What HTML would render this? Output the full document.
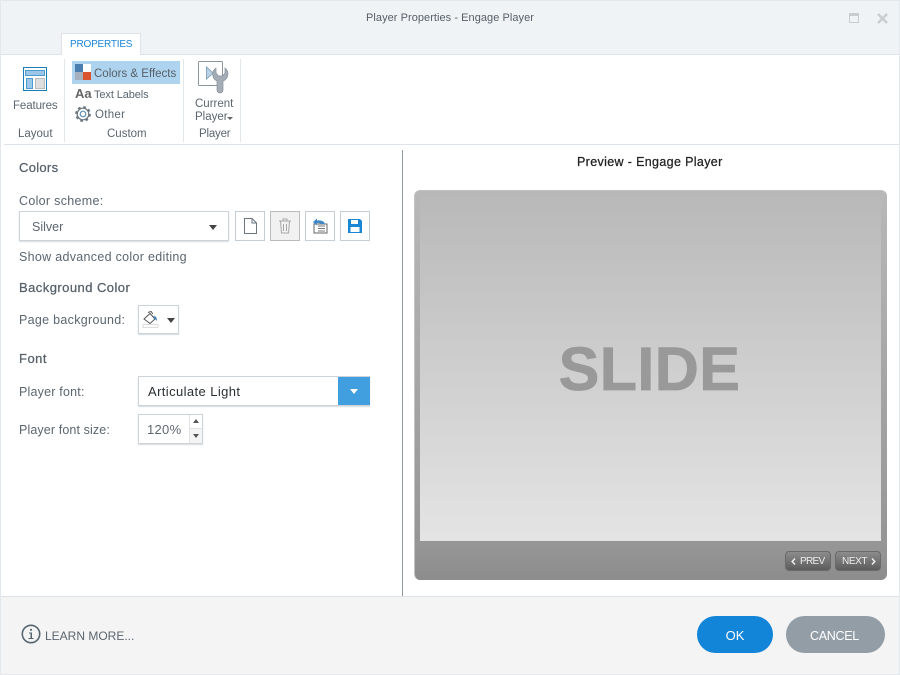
<!DOCTYPE html>
<html><head><meta charset="utf-8"><style>
html,body{margin:0;padding:0}
body{width:900px;height:675px;position:relative;overflow:hidden;background:#fff;font-family:"Liberation Sans",sans-serif;color:#5b6670;font-size:12.5px}
.t{position:absolute;white-space:nowrap;line-height:16px;letter-spacing:.3px}
.r{font-size:11.5px;letter-spacing:0}
.b{position:absolute;box-sizing:border-box}
.h{font-size:13px;font-weight:400;color:#56606a;-webkit-text-stroke:.25px #56606a}
svg{position:absolute;overflow:visible}
.ib{position:absolute;top:211px;width:30px;height:30px;box-sizing:border-box;border:1px solid #c3ced6;background:#fff}
</style></head><body>
<div class="b" style="left:0;top:0;width:900px;height:675px;border:1px solid #e3e8ed;z-index:9;pointer-events:none"></div>
<div class="b" style="left:1px;top:1px;width:898px;height:53px;background:#f0f3f6"></div>
<div class="t" style="left:0;width:900px;text-align:center;top:10px;font-size:11px;letter-spacing:.05px;color:#565f68">Player Properties - Engage Player</div>
<svg style="left:849px;top:13px" width="11" height="11"><rect x=".5" y=".5" width="9" height="9" fill="none" stroke="#c9ccd0"/><rect x="0" y="0" width="10" height="3" fill="#c9ccd0"/></svg>
<svg style="left:877px;top:13px" width="11" height="11"><path d="M1 1L10 10M10 1L1 10" stroke="#c9ccd0" stroke-width="2.4"/></svg>
<div class="b" style="left:1px;top:54px;width:898px;height:1px;background:#dde3e8"></div>
<div class="b" style="left:61px;top:33px;width:80px;height:22px;background:#fff;border:1px solid #dde3e8;border-bottom:0"></div>
<div class="t" style="left:70px;top:37px;font-size:10px;letter-spacing:-.2px;color:#1a86d6">PROPERTIES</div>

<div class="b" style="left:23px;top:67px;width:24px;height:24px;border:1px solid #1a7fb8;background:#fff"></div>
<div class="b" style="left:25px;top:70px;width:20px;height:6px;background:#9cc7e6;border:1px solid #4d9bd0"></div>
<div class="b" style="left:26px;top:78px;width:7px;height:11px;background:#9cc7e6;border:1px solid #4d9bd0"></div>
<div class="b" style="left:35px;top:78px;width:10px;height:11px;background:#dedede;border:1px solid #bbb"></div>
<div class="t r" style="left:13px;top:98px;letter-spacing:-.1px">Features</div>
<div class="t r" style="left:18px;top:126px">Layout</div>
<div class="b" style="left:64px;top:59px;width:1px;height:83px;background:#e2e7eb"></div>

<div class="b" style="left:72px;top:61px;width:108px;height:23px;background:#aed3ee"></div>
<div class="b" style="left:75px;top:64px;width:8px;height:8px;background:#4a7eb0"></div>
<div class="b" style="left:83px;top:64px;width:8px;height:8px;background:#fff"></div>
<div class="b" style="left:75px;top:72px;width:8px;height:8px;background:#a5b0bf"></div>
<div class="b" style="left:83px;top:72px;width:8px;height:8px;background:#d9532c"></div>
<div class="t r" style="left:94px;top:66px;color:#56606a">Colors &amp; Effects</div>
<div class="t" style="left:75px;top:86px;font-size:13px;font-weight:700;color:#666;letter-spacing:0">Aa</div>
<div class="t" style="left:94px;top:87px;font-size:11px;letter-spacing:-.1px">Text Labels</div>
<svg style="left:75px;top:106px" width="16" height="16" viewBox="0 0 16 16"><circle cx="8" cy="8" r="5.800" fill="#fff" stroke="#6a747d" stroke-width="1.200"/><circle cx="8" cy="8" r="2.800" fill="none" stroke="#5a8fb8" stroke-width="1.200"/><circle cx="8" cy="8" r="7" fill="none" stroke="#6a747d" stroke-width="1.700" stroke-dasharray="2.750 2.750"/></svg>
<div class="t" style="left:95px;top:107px;font-size:11.5px">Other</div>
<div class="t r" style="left:107px;top:126px">Custom</div>
<div class="b" style="left:183px;top:59px;width:1px;height:83px;background:#e2e7eb"></div>

<svg style="left:197px;top:60px" width="36" height="34" viewBox="0 0 36 34"><rect x="1.500" y="1.500" width="24" height="24" rx="1" fill="#fff" stroke="#8b959e"/><path d="M9.500 7L16 13L9.500 19Z" fill="#bcd3e6" stroke="#87a7c0"/><path d="M19 8A7.500 7.500 0 0 0 20 21V30A3 3 0 0 0 26 30V21A7.500 7.500 0 0 0 28 8V13L25.500 16H21.500L19 13Z" fill="#a4adb6" stroke="#87919a" stroke-width=".7"/></svg>
<div class="t r" style="left:195px;top:96px">Current</div>
<div class="t r" style="left:195px;top:109px">Player</div>
<svg style="left:227px;top:117px" width="6" height="3"><path d="M0 0H6L3 3Z" fill="#666"/></svg>
<div class="t r" style="left:199px;top:126px;letter-spacing:-.2px">Player</div>
<div class="b" style="left:240px;top:59px;width:1px;height:83px;background:#e2e7eb"></div>
<div class="b" style="left:4px;top:144px;width:895px;height:1px;background:#dde3e8"></div>

<div class="t h" style="left:19px;top:160px">Colors</div>
<div class="t" style="left:19px;top:193px">Color scheme:</div>
<div class="b" style="left:19px;top:211px;width:210px;height:30px;border:1px solid #ccd4da;box-shadow:0 1px 1px #d5dbe0;background:#fff"></div>
<div class="t" style="left:32px;top:219px;letter-spacing:0">Silver</div>
<svg style="left:209px;top:225px" width="9" height="5"><path d="M0 0H8L4 5Z" fill="#444"/></svg>

<div class="ib" style="left:235px"></div>
<svg style="left:244px;top:218px" width="13" height="16"><path d="M.5.500H8L12.500 5V15.500H.5ZM8 .5V5H12.500" fill="#fff" stroke="#6b7680"/></svg>
<div class="ib" style="left:270px;background:#f1f1f1;border-color:#bcbcbc"></div>
<svg style="left:278px;top:218px" width="14" height="16"><path d="M1 3H13M5 3V1H9V3M2.500 3.500L3.500 15H10.500L11.500 3.500M5.500 6V13M8.500 6V13" fill="none" stroke="#a9a9a9"/></svg>
<div class="ib" style="left:305px"></div>
<svg style="left:312px;top:217px" width="17" height="17" viewBox="0 0 17 17"><path d="M2 7H15V16H2Z" fill="#fff" stroke="#666"/><path d="M6 9H13M6 11.500H13M6 14H13" stroke="#777"/><path d="M1 5L5 1.500V3.500C9 3 12 4 13 7H9C8 6 6 6 5 6V8.500Z" fill="#3f87c7"/></svg>
<div class="ib" style="left:340px"></div>
<svg style="left:347px;top:218px" width="16" height="16" viewBox="0 0 16 16"><path d="M1 1H13L15 3V15H1Z" fill="#1a86d6"/><rect x="4" y="2" width="7" height="4" fill="#fff"/><rect x="3.500" y="9" width="9" height="5" fill="#fff"/></svg>
<div class="t" style="left:19px;top:249px">Show advanced color editing</div>

<div class="t h" style="left:19px;top:280px;letter-spacing:.45px">Background Color</div>
<div class="t" style="left:19px;top:312px">Page background:</div>
<div class="b" style="left:138px;top:305px;width:41px;height:29px;border:1px solid #ccd4da;box-shadow:0 1px 1px #d5dbe0;background:#fff"></div>
<svg style="left:142px;top:311px" width="18" height="18" viewBox="0 0 18 18"><path d="M2 8L8 2.500L13 8L8 12.500Z" fill="#fff" stroke="#555"/><path d="M6 1.500L9 .5L11 3" fill="none" stroke="#555"/><path d="M11.500 5C14 5 15 7 15 10L12.500 7.500Z" fill="#3f87c7"/><rect x="1" y="13.500" width="15" height="3" fill="#fff" stroke="#ddd"/></svg>
<svg style="left:167px;top:318px" width="9" height="5"><path d="M0 0H8L4 5Z" fill="#444"/></svg>

<div class="t h" style="left:19px;top:351px;letter-spacing:.5px">Font</div>
<div class="t" style="left:19px;top:384px;letter-spacing:.2px">Player font:</div>
<div class="b" style="left:138px;top:376px;width:232px;height:30px;border:1px solid #ccd4da;box-shadow:0 1px 1px #d5dbe0;background:#fff"></div>
<div class="b" style="left:338px;top:377px;width:32px;height:28px;background:#429fdf"></div>
<svg style="left:350px;top:389px" width="9" height="5"><path d="M0 0H8L4 5Z" fill="#fff"/></svg>
<div class="t" style="left:148px;top:384px;font-size:13px;letter-spacing:.4px;color:#2a2f33">Articulate Light</div>
<div class="t" style="left:19px;top:422px;letter-spacing:.12px">Player font size:</div>
<div class="b" style="left:138px;top:414px;width:65px;height:30px;border:1px solid #ccd4da;box-shadow:0 1px 1px #d5dbe0;background:#fff"></div>
<div class="b" style="left:189px;top:415px;width:1px;height:28px;background:#dfe3e6"></div>
<div class="b" style="left:190px;top:428px;width:13px;height:1px;background:#dfe3e6"></div>
<div class="b" style="left:190px;top:429px;width:12px;height:14px;background:#f4f4f4"></div>
<svg style="left:193px;top:419px" width="7" height="4"><path d="M0 4H6L3 0Z" fill="#555"/></svg>
<svg style="left:193px;top:434px" width="7" height="4"><path d="M0 0H6L3 4Z" fill="#555"/></svg>
<div class="t" style="left:147px;top:422px;font-size:13px;color:#5f6870">120%</div>

<div class="b" style="left:402px;top:150px;width:1px;height:446px;background:#8f9aa3"></div>
<div class="t" style="left:577px;top:154px;font-size:12.5px;letter-spacing:.35px;color:#222;-webkit-text-stroke:.25px #222">Preview - Engage Player</div>
<div class="b" style="left:414px;top:190px;width:473px;height:390px;border-radius:6px;background:linear-gradient(#b8b8b8,#959595 92%,#8c8c8c);border-left:1px solid #c4c4c4;border-top:1px solid #c0c0c0"></div>
<div class="b" style="left:420px;top:191px;width:461px;height:350px;background:linear-gradient(#b8b8b8,#e4e4e4)"></div>
<div class="t" style="left:420px;width:459px;text-align:center;top:329px;line-height:80px;font-size:61px;font-weight:700;color:#999;letter-spacing:.4px;-webkit-text-stroke:.8px #999">SLIDE</div>
<div class="b" style="left:785px;top:551px;width:46px;height:20px;border-radius:4px;background:linear-gradient(#8c8c8c,#5c5c5c);border:1px solid #6a6a6a"></div>
<div class="b" style="left:835px;top:551px;width:46px;height:20px;border-radius:4px;background:linear-gradient(#8c8c8c,#5c5c5c);border:1px solid #6a6a6a"></div>
<svg style="left:791px;top:558px" width="5" height="7"><path d="M4 .5L1.200 3.500L4 6.500" fill="none" stroke="#eee" stroke-width="1.500"/></svg>
<div class="t" style="left:800px;top:555px;font-size:10px;line-height:13px;color:#eee;letter-spacing:-.7px">PREV</div>
<div class="t" style="left:842px;top:555px;font-size:10px;line-height:13px;color:#eee;letter-spacing:-.4px">NEXT</div>
<svg style="left:871px;top:558px" width="5" height="7"><path d="M1 .5L3.800 3.500L1 6.500" fill="none" stroke="#eee" stroke-width="1.500"/></svg>

<div class="b" style="left:1px;top:596px;width:898px;height:78px;background:#f4f4f5;border-top:1px solid #dde3e8"></div>
<svg style="left:21px;top:624px" width="20" height="20" viewBox="0 0 20 20"><circle cx="10" cy="10" r="8.700" fill="none" stroke="#56666f" stroke-width="1.600"/><circle cx="10" cy="5.800" r="1.100" fill="#56666f"/><path d="M8 8.500H11V14H12.500V15H7.500V14H9.500V9.500H8Z" fill="#56666f"/></svg>
<div class="t" style="left:45px;top:628px;font-size:12px;color:#5b6670;letter-spacing:0">LEARN MORE...</div>
<div class="b" style="left:697px;top:616px;width:76px;height:37px;border-radius:19px;background:#1285d8"></div>
<div class="t" style="left:697px;width:76px;text-align:center;top:628px;color:#fff;font-size:13px;letter-spacing:0">OK</div>
<div class="b" style="left:786px;top:616px;width:99px;height:37px;border-radius:19px;background:#939da6"></div>
<div class="t" style="left:785px;width:99px;text-align:center;top:628px;color:#fff;font-size:12.5px;letter-spacing:-.3px">CANCEL</div>
</body></html>
